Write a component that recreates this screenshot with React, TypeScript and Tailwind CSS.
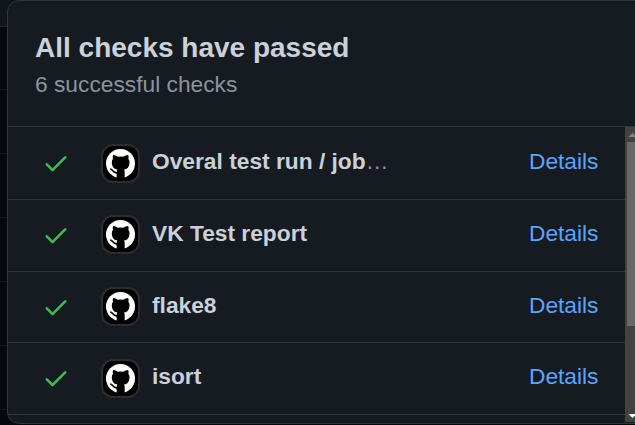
type Check = { name: string; truncated?: boolean; height: string; line: string; avatar: string; icon: string };

const checks: Check[] = [
  { name: 'Overal test run / job', truncated: true, height: 'h-[73px]', line: 'leading-[69px]', avatar: 'mt-[17px]', icon: 'mt-[5px]' },
  { name: 'VK Test report', height: 'h-[72px]', line: 'leading-[67px]', avatar: 'mt-[15px]', icon: 'mt-[6px]' },
  { name: 'flake8', height: 'h-[71px]', line: 'leading-[67px]', avatar: 'mt-[15px]', icon: 'mt-[6px]' },
  { name: 'isort', height: 'h-[72px]', line: 'leading-[67px]', avatar: 'mt-[16px]', icon: 'mt-[5px]' },
];

function CheckIcon({ className }: { className: string }) {
  return (
    <svg viewBox="0 0 16 16" className={`size-7 shrink-0 ${className}`} fill="#3fb950">
      <path d="M13.78 4.22a.75.75 0 010 1.06l-7.25 7.25a.75.75 0 01-1.06 0L2.22 9.28a.75.75 0 011.06-1.06L6 10.94l6.72-6.72a.75.75 0 011.06 0z" />
    </svg>
  );
}

function Avatar() {
  return (
    <div className="size-[38.5px] shrink-0 rounded-[12px] border-2 border-[#2a2e34] bg-black pt-[3px] pl-[3px]">
      <svg viewBox="0 0 90 90" className="size-[29px]">
        <circle cx="45" cy="45" r="45" fill="#fff" />
        <path
          d="M22 19C28 19 33 22 36 24Q45.500 22 54 24C57 22 63 19 69 19Q71 25 69.500 31Q74 36 73 44C72 56 66 62 56 63.500Q58 67 58 71V90H33V71Q33 67 35 63.500C26 62 19 56 18 44Q17 36 21.500 31Q20 25 22 19Z"
          fill="#000"
        />
        <path d="M13 62C22 62 21 76 34 74" fill="none" stroke="#000" strokeWidth="5" />
      </svg>
    </div>
  );
}

function Row({ check }: { check: Check }) {
  return (
    <div className={`flex items-start border-b border-[#30363d] pr-[26.5px] pl-[34px] text-[22.75px] ${check.height} ${check.line}`}>
      <div className={`flex items-start ${check.avatar}`}>
        <CheckIcon className={check.icon} />
        <div className="ml-[31px]">
          <Avatar />
        </div>
      </div>
      <div className="ml-[12.5px] flex-1 whitespace-nowrap text-[#8b949e]">
        <span className="font-bold text-[#c9d1d9]">{check.name}</span>
        {check.truncated && '…'}
      </div>
      <a className="text-[#58a6ff]">Details</a>
    </div>
  );
}

function Scrollbar() {
  return (
    <div className="flex h-[295px] w-[10px] shrink-0 flex-col overflow-hidden bg-[#424242]">
      <svg viewBox="0 0 10 15" className="h-[15px] w-[10px] shrink-0">
        <path d="M3.5 10L7.5 6L11.5 10z" fill="#858585" />
      </svg>
      <div className="ml-[2px] h-[184px] bg-[#686868]" />
      <svg viewBox="0 0 10 15" className="mt-auto h-[15px] w-[10px] shrink-0">
        <path d="M3.5 7L7.5 11L11.5 7z" fill="#fff" />
      </svg>
    </div>
  );
}

export default function App() {
  return (
    <div className="flex h-[425px] w-[635px] overflow-hidden bg-[#05080d] font-['Liberation_Sans',Arial,sans-serif]">
      <div className="-mr-4 flex w-[23px] shrink-0 flex-col">
        <div className="h-[27px] shrink-0 border-b border-[#24282e] bg-[#11151c]" />
        <div className="h-[63px] shrink-0 border-b border-[#14181d]" />
        {[0, 1, 2, 3, 4].map((i) => (
          <div key={i} className="h-16 shrink-0 border-b border-[#14181d]" />
        ))}
      </div>
      <div className="relative h-[424px] w-[660px] shrink-0 overflow-hidden rounded-xl border border-[#30363d] bg-[#161b22]">
        <div className="h-[126px] border-b border-[#30363d] pt-[30px] pl-[27px]">
          <h1 className="text-[28px] leading-[34px] font-bold text-[#c9d1d9]">All checks have passed</h1>
          <p className="mt-[2px] text-[22.75px] leading-[34px] text-[#8b949e]">6 successful checks</p>
        </div>
        <div className="flex">
          <div className="w-[617px] shrink-0">
            {checks.map((check) => (
              <Row key={check.name} check={check} />
            ))}
          </div>
          <Scrollbar />
        </div>
      </div>
    </div>
  );
}
